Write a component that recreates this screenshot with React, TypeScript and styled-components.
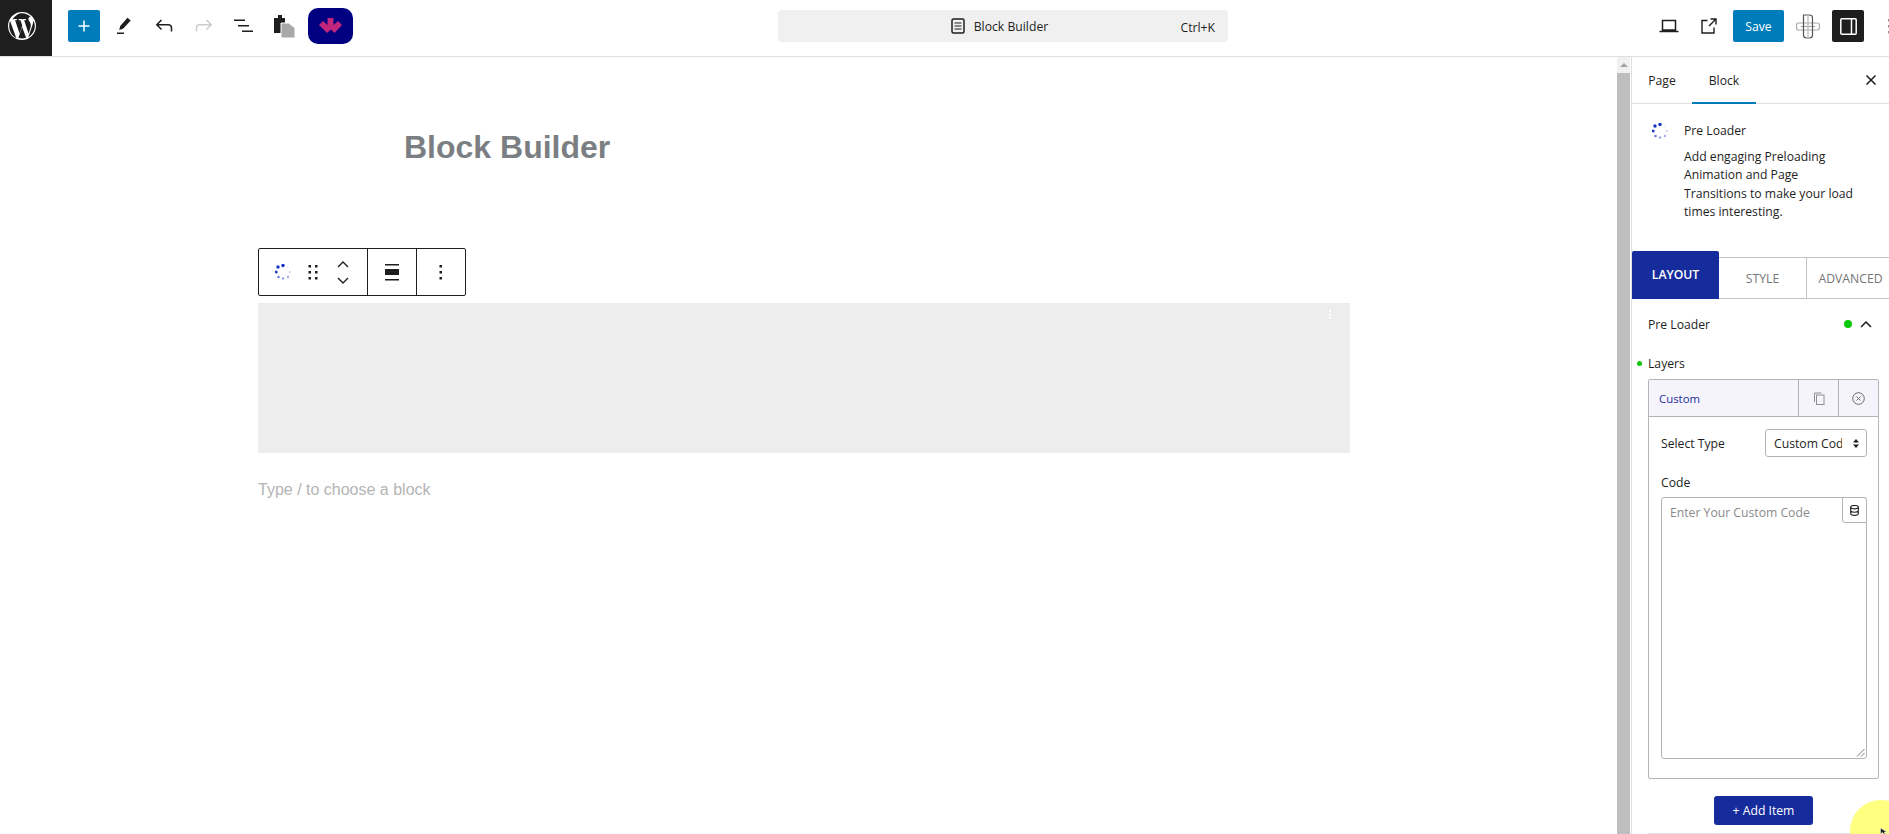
import * as React from "react";
import styled, { createGlobalStyle } from "styled-components";

const GlobalStyle = createGlobalStyle`
  html, body { margin: 0; padding: 0; background: #fff; overflow: hidden; }
  body { font-family: "Open Sans", "Noto Sans", sans-serif; color: #1e1e1e; }
  * { box-sizing: border-box; }
`;

const Page = styled.div`
  width: 1889px;
  height: 834px;
  display: flex;
  flex-direction: column;
  overflow: hidden;
`;

const TopBar = styled.header`
  height: 57px;
  flex: none;
  display: flex;
  align-items: flex-start;
  border-bottom: 1px solid #e0e0e0;
  position: relative;
`;

const WpTile = styled.div`
  width: 52px;
  height: 56px;
  padding: 0 8px 4px 0;
  background: #1e1e1e;
  display: flex;
  align-items: center;
  justify-content: center;
`;

const LeftTools = styled.div`
  display: flex;
  align-items: center;
  height: 52px;
  margin-left: 16px;
`;

const SquareButton = styled.div<{ $bg?: string }>`
  width: 32px;
  height: 32px;
  border-radius: 2px;
  background: ${(p) => p.$bg ?? "transparent"};
  display: flex;
  align-items: center;
  justify-content: center;
  flex: none;
`;

const ToolSlot = styled.div<{ $w?: number }>`
  width: ${(p) => p.$w ?? 40}px;
  height: 32px;
  display: flex;
  align-items: center;
  justify-content: center;
  flex: none;
`;

const BrandTile = styled.div`
  width: 45px;
  height: 36px;
  border-radius: 10px;
  background: #000080;
  display: flex;
  align-items: center;
  justify-content: center;
  flex: none;
`;

const CommandBar = styled.div`
  position: absolute;
  left: 778px;
  top: 10px;
  width: 450px;
  height: 32px;
  border-radius: 4px;
  background: #f0f0f0;
  display: flex;
  align-items: center;
  justify-content: center;
  gap: 9px;
  padding-right: 7px;
  font-size: 12.2px;
`;

const CommandShortcut = styled.span`
  position: absolute;
  right: 13px;
  top: 9px;
  line-height: 17px;
  font-size: 12.2px;
`;

const RightTools = styled.div`
  margin-left: auto;
  margin-right: -26px;
  height: 52px;
  display: flex;
  align-items: center;
`;

const SaveButton = styled.div`
  width: 51px;
  height: 32px;
  margin-left: 4px;
  border-radius: 2px;
  background: #007cba;
  color: #fff;
  font-size: 12.2px;
  display: flex;
  align-items: center;
  justify-content: center;
`;

const Body = styled.div`
  flex: 1;
  min-height: 0;
  display: flex;
`;

const Canvas = styled.main`
  flex: 1;
  min-width: 0;
  padding: 66px 0 0 258px;
`;

const PostTitle = styled.h1`
  margin: 0 0 0 146px;
  font: 700 32px/48px "Liberation Sans", Arial, sans-serif;
  color: #7b7f83;
`;

const BlockToolbar = styled.div`
  margin-top: 77px;
  width: 208px;
  height: 48px;
  border: 1px solid #1e1e1e;
  border-radius: 2px;
  display: flex;
  background: #fff;
`;

const ToolbarGroup = styled.div<{ $w: number; $start?: boolean }>`
  width: ${(p) => p.$w}px;
  flex: none;
  display: flex;
  align-items: center;
  justify-content: ${(p) => (p.$start ? "flex-start" : "center")};
  padding-left: ${(p) => (p.$start ? 16 : 0)}px;
  & + & { border-left: 1px solid #1e1e1e; }
`;

const MoverColumn = styled.div`
  display: flex;
  flex-direction: column;
  gap: 9px;
  margin-left: 2px;
  svg { display: block; }
`;

const LoaderBlock = styled.div`
  margin-top: 7px;
  width: 1092px;
  height: 150px;
  background: #ededed;
  position: relative;
`;

const BlockDots = styled.div`
  position: absolute;
  right: 19px;
  top: 7px;
  display: flex;
  flex-direction: column;
  gap: 1.5px;
  i { width: 2px; height: 2px; background: #fff; display: block; }
`;

const Placeholder = styled.p`
  margin: 24px 0 0;
  font: 16px/26px "Liberation Sans", Arial, sans-serif;
  color: #b4b4b4;
`;

const ScrollTrack = styled.div`
  width: 15px;
  flex: none;
  background: #fff;
  border-right: 1px solid #e0e0e0;
  display: flex;
  flex-direction: column;
  align-items: stretch;
  padding-right: 1px;
`;

const ScrollArrow = styled.div`
  height: 16px;
  flex: none;
  background: #f1f1f1;
  display: flex;
  align-items: center;
  justify-content: center;
  &::before {
    content: "";
    border-left: 4px solid transparent;
    border-right: 4px solid transparent;
    border-bottom: 4px solid #a3a3a3;
  }
`;

const ScrollThumb = styled.div`
  flex: 1;
  background: #bebebe;
`;

const Sidebar = styled.aside`
  width: 257px;
  flex: none;
  position: relative;
  overflow: hidden;
  font-size: 12.2px;
`;

const SideTabs = styled.div`
  height: 47px;
  display: flex;
  align-items: stretch;
  border-bottom: 1px solid #e0e0e0;
  position: relative;
`;

const SideTab = styled.div<{ $active?: boolean; $w: number }>`
  width: ${(p) => p.$w}px;
  display: flex;
  align-items: center;
  justify-content: center;
  box-shadow: ${(p) => (p.$active ? "inset 0 -2px 0 #007cba" : "none")};
  margin-bottom: -1px;
`;

const CloseMark = styled.div`
  position: absolute;
  right: 12px;
  top: 17px;
  display: flex;
`;

const BlockCard = styled.div`
  display: flex;
  padding: 18px 16px 0 20px;
  height: 147px;
`;

const CardIcon = styled.div`
  width: 16px;
  height: 16px;
  margin: 1px 16px 0 0;
  flex: none;
`;

const CardTitle = styled.div`
  line-height: 18px;
  font-weight: 500;
  margin-bottom: 8px;
`;

const CardText = styled.div`
  line-height: 18.3px;
  width: 174px;
`;

const PanelTabs = styled.div`
  display: flex;
  align-items: flex-end;
  height: 48px;
`;

const PanelTab = styled.div<{ $active?: boolean; $w: number }>`
  width: ${(p) => p.$w}px;
  flex: none;
  height: ${(p) => (p.$active ? 48 : 42)}px;
  display: flex;
  align-items: center;
  justify-content: center;
  font-weight: ${(p) => (p.$active ? 600 : 400)};
  color: ${(p) => (p.$active ? "#fff" : "#757575")};
  background: ${(p) => (p.$active ? "#172c9c" : "#fff")};
  border-radius: ${(p) => (p.$active ? "2px 2px 0 0" : "0")};
  padding-bottom: ${(p) => (p.$active ? 2 : 0)}px;
  border: ${(p) => (p.$active ? "none" : "1px solid #c4c4c4")};
  border-left: ${(p) => (p.$active ? "none" : "0")};
  white-space: nowrap;
`;

const PanelHead = styled.div`
  height: 50px;
  display: flex;
  align-items: center;
  padding: 0 16px;
`;

const PanelName = styled.span`
  flex: 1;
`;

const GreenDot = styled.span<{ $size: number }>`
  width: ${(p) => p.$size}px;
  height: ${(p) => p.$size}px;
  border-radius: 50%;
  background: #0cc80c;
  display: block;
  flex: none;
`;

const LayersLabel = styled.div`
  display: flex;
  align-items: center;
  gap: 6px;
  padding-left: 5px;
  height: 18px;
  margin-top: 5px;
`;

const RepeaterBox = styled.div`
  margin: 7px 0 0 16px;
  width: 231px;
  height: 400px;
  border: 1px solid #b4b4b4;
  border-radius: 2px;
  display: flex;
  flex-direction: column;
`;

const RepeaterHead = styled.div`
  height: 37px;
  flex: none;
  display: flex;
  background: #f5f3fb;
  border-bottom: 1px solid #b4b4b4;
`;

const RepeaterTitle = styled.div`
  flex: 1;
  color: #1d2f9e;
  font-size: 11.4px;
  display: flex;
  align-items: center;
  padding-left: 10px;
`;

const RepeaterAction = styled.div`
  width: 40px;
  flex: none;
  border-left: 1px solid #b4b4b4;
  display: flex;
  align-items: center;
  justify-content: center;
`;

const RepeaterBody = styled.div`
  padding: 12px 11px 0 12px;
  flex: 1;
  display: flex;
  flex-direction: column;
`;

const TypeRow = styled.div`
  display: flex;
  align-items: center;
  justify-content: space-between;
  height: 28px;
`;

const FakeSelect = styled.div`
  width: 102px;
  height: 28px;
  border: 1px solid #b4b4b4;
  border-radius: 3px;
  padding: 0 7px 0 8px;
  display: flex;
  align-items: center;
  justify-content: space-between;
  span { width: 68px; overflow: hidden; white-space: nowrap; }
`;

const CodeLabel = styled.div`
  margin-top: 17px;
  line-height: 18px;
`;

const CodeArea = styled.div`
  margin-top: 5px;
  flex: none;
  height: 262px;
  width: 206px;
  border: 1px solid #b4b4b4;
  border-radius: 3px;
  position: relative;
  padding: 6px 8px;
  color: #8a8a8a;
  line-height: 18px;
`;

const DbButton = styled.div`
  position: absolute;
  right: -1px;
  top: -1px;
  width: 25px;
  height: 26px;
  border: 1px solid #b4b4b4;
  border-radius: 0 3px 0 3px;
  display: flex;
  align-items: center;
  justify-content: center;
  background: #fff;
`;

const ResizeGrip = styled.svg`
  position: absolute;
  right: 1px;
  bottom: 1px;
`;

const AddItemRow = styled.div`
  display: flex;
  justify-content: center;
  margin: 17px 0 0 16px;
  width: 231px;
`;

const AddItemButton = styled.div`
  width: 99px;
  height: 29px;
  border-radius: 3px;
  background: #172c9c;
  color: #fff;
  display: flex;
  align-items: center;
  justify-content: center;
`;

const PanelFoot = styled.div`
  margin: 8px 0 0 16px;
  height: 1px;
  background: #e0e0e0;
`;

const CursorHalo = styled.div`
  position: absolute;
  right: -23px;
  bottom: -28px;
  width: 62px;
  height: 62px;
  border-radius: 50%;
  background: #ffff80;
`;

const CursorArrow = styled.svg`
  position: absolute;
  right: 2px;
  bottom: 0;
`;

const Spinner = () => (
  <svg width="16" height="16" viewBox="0 0 16 16">
    <circle cx="8" cy="1.500" r="1.700" fill="#1432c8" />
    <circle cx="3" cy="3" r="1.700" fill="#1432c8" />
    <circle cx="1.200" cy="8" r="1.500" fill="#1f3cc8" />
    <circle cx="3.500" cy="13" r="1.300" fill="#6c7ce0" />
    <circle cx="8" cy="14.500" r="1.200" fill="#98a4ea" />
    <circle cx="13" cy="13" r="1.200" fill="#a2adee" />
    <circle cx="14.800" cy="8" r="1" fill="#c0c8f2" />
    <circle cx="12.500" cy="3" r="0.800" fill="#dde1f8" />
  </svg>
);

const WpLogo = () => (
  <svg width="32" height="32" viewBox="0 0 24 24" fill="#fff">
    <path d="M12 1.500C6.200 1.500 1.500 6.200 1.500 12S6.200 22.500 12 22.500 22.500 17.800 22.500 12 17.800 1.500 12 1.500zm0 .9c2.500 0 4.800 1 6.500 2.600h-.1c-1 0-1.600.8-1.600 1.700 0 .8.500 1.400 1 2.200.4.600.8 1.500.8 2.700 0 .8-.3 1.800-.7 3.100l-.9 3.100-3.400-10.100c.6 0 1.100-.1 1.100-.1.500-.1.500-.8 0-.8 0 0-1.500.1-2.500.1-.9 0-2.400-.1-2.400-.1-.5 0-.6.800 0 .8 0 0 .5.100 1 .1l1.400 3.900-2 6.100-3.400-10c.6 0 1.100-.1 1.100-.1.500-.1.500-.8 0-.8 0 0-1.500.1-2.500.1h-.6C7.500 3.600 9.600 2.400 12 2.400zM3 8.100l4.700 12.900C4.500 19.400 2.400 16 2.400 12c0-1.400.2-2.700.6-3.900zm9.100 4.700l2.900 7.900v.1c-1 .3-2 .5-3 .5-.9 0-1.800-.1-2.700-.4l2.800-8.100zm8.100-5.300c.9 1.500 1.400 3 1.400 4.500 0 3.500-1.900 6.600-4.800 8.300l2.900-8.500c.6-1.400.7-2.500.7-3.500 0-.4 0-.6-.2-.8z" />
  </svg>
);

const Dots = ({ gapY = 6 }: { gapY?: number }) => (
  <svg width="4" height={gapY * 2 + 3} viewBox={`0 0 4 ${gapY * 2 + 3}`} fill="#1e1e1e">
    <rect x="0.500" y="0" width="2.500" height="2.500" />
    <rect x="0.500" y={gapY} width="2.500" height="2.500" />
    <rect x="0.500" y={gapY * 2} width="2.500" height="2.500" />
  </svg>
);

export default function App() {
  return (
    <Page>
      <GlobalStyle />
      <TopBar>
        <WpTile>
          <WpLogo />
        </WpTile>
        <LeftTools>
          <SquareButton $bg="#007cba">
            <svg width="14" height="14" viewBox="0 0 14 14" stroke="#fff" strokeWidth="1.500">
              <path d="M7 1.500v11M1.500 7h11" />
            </svg>
          </SquareButton>
          <ToolSlot $w={48}>
            <svg width="18" height="20" viewBox="0 0 18 20" fill="#1e1e1e">
              <path d="M12.500 1.800l3.200 2.800-7.600 8.100-3.900 1.200 1-3.900z" />
              <rect x="2" y="16.500" width="7" height="1.500" />
            </svg>
          </ToolSlot>
          <ToolSlot $w={32}>
            <svg width="18" height="14" viewBox="0 0 18 14" fill="none" stroke="#1e1e1e" strokeWidth="1.500">
              <path d="M16.500 12.500V9c0-2-1.500-3.200-3.500-3.200H2M6.500 1L1.800 5.800l4.700 4.700" />
            </svg>
          </ToolSlot>
          <ToolSlot $w={48}>
            <svg width="18" height="14" viewBox="0 0 18 14" fill="none" stroke="#cccccc" strokeWidth="1.500">
              <path d="M1.500 12.500V9c0-2 1.500-3.200 3.500-3.200h11M11.500 1l4.700 4.800-4.700 4.700" />
            </svg>
          </ToolSlot>
          <ToolSlot $w={32}>
            <svg width="20" height="14" viewBox="0 0 20 14" fill="#1e1e1e">
              <rect x="0" y="0.500" width="11" height="1.500" />
              <rect x="4" y="6" width="11" height="1.500" />
              <rect x="8" y="11.500" width="11" height="1.500" />
            </svg>
          </ToolSlot>
          <ToolSlot $w={48}>
            <svg width="21" height="23" viewBox="0 0 21 23">
              <path d="M0 3h4V0h4v3h3v15H0z" fill="#1e1e1e" />
              <path d="M7 8h8l6 5v10H7z" fill="#a8a8a8" stroke="#fff" strokeWidth="1" />
            </svg>
          </ToolSlot>
          <BrandTile>
            <svg width="23" height="16" viewBox="0 0 23 16" fill="#c2257e">
              <path d="M8.500 0h6v7l4.500-4 4 4-7.500 8-3.500-3.500L8 15 0 7l4-4 4.500 4z" />
            </svg>
          </BrandTile>
        </LeftTools>
        <CommandBar>
          <svg width="14" height="16" viewBox="0 0 14 16" fill="none" stroke="#1e1e1e">
            <rect x="1" y="1" width="12" height="14" rx="1.500" strokeWidth="1.500" />
            <path d="M3.500 5h7M3.500 8h7M3.500 11h7" strokeWidth="1.200" />
          </svg>
          <span>Block Builder</span>
          <CommandShortcut>Ctrl+K</CommandShortcut>
        </CommandBar>
        <RightTools>
          <ToolSlot $w={40}>
            <svg width="20" height="14" viewBox="0 0 20 14" fill="none" stroke="#1e1e1e" strokeWidth="1.500">
              <path d="M3.500 1.500h13v9.500h-13zM0.500 12.500h19" />
            </svg>
          </ToolSlot>
          <ToolSlot $w={40}>
            <svg width="16" height="16" viewBox="0 0 16 16" fill="none" stroke="#1e1e1e" strokeWidth="1.400">
              <path d="M6.500 2.500H1v12.500h12V9.500M8 8l7-7M9.500 1H15v5.500" />
            </svg>
          </ToolSlot>
          <SaveButton>Save</SaveButton>
          <ToolSlot $w={48}>
            <svg width="24" height="25" viewBox="0 0 24 25" fill="none" strokeWidth="1.200">
              <path d="M2 9h19c1.500 0 2.500 1 2.500 2v3c0 1-1 2-2.500 2H2c-1 0-1.500-1-1.500-2v-3c0-1 .5-2 1.500-2z" stroke="#a8a8a8" />
              <path d="M5 12.500h14" stroke="#a8a8a8" />
              <path d="M7.500 1v20c0 2 1 3 3 3h3c2 0 3-1 3-3V4c0-2-1-3-3-3z" stroke="#555" />
              <path d="M12 1v24" stroke="#b8b8b8" />
            </svg>
          </ToolSlot>
          <SquareButton $bg="#1e1e1e">
            <svg width="17" height="17" viewBox="0 0 17 17" fill="none" stroke="#fff" strokeWidth="1.500">
              <rect x="0.800" y="0.800" width="15.400" height="15.400" rx="1" />
              <path d="M11.500 1v15" />
            </svg>
          </SquareButton>
          <ToolSlot $w={51}>
            <Dots />
          </ToolSlot>
        </RightTools>
      </TopBar>
      <Body>
        <Canvas>
          <PostTitle>Block Builder</PostTitle>
          <BlockToolbar>
            <ToolbarGroup $w={108} $start>
              <Spinner />
              <ToolSlot $w={44}>
                <svg width="10" height="16" viewBox="0 0 10 16" fill="#1e1e1e">
                  <rect x="0.500" y="1" width="2.500" height="2.500" />
                  <rect x="7" y="1" width="2.500" height="2.500" />
                  <rect x="0.500" y="7" width="2.500" height="2.500" />
                  <rect x="7" y="7" width="2.500" height="2.500" />
                  <rect x="0.500" y="13" width="2.500" height="2.500" />
                  <rect x="7" y="13" width="2.500" height="2.500" />
                </svg>
              </ToolSlot>
              <MoverColumn>
                <svg width="12" height="7" viewBox="0 0 12 7" fill="none" stroke="#1e1e1e" strokeWidth="1.400">
                  <path d="M1 6l5-5 5 5" />
                </svg>
                <svg width="12" height="7" viewBox="0 0 12 7" fill="none" stroke="#1e1e1e" strokeWidth="1.400">
                  <path d="M1 1l5 5 5-5" />
                </svg>
              </MoverColumn>
            </ToolbarGroup>
            <ToolbarGroup $w={49}>
              <svg width="14" height="17" viewBox="0 0 14 17" fill="#1e1e1e">
                <rect x="0" y="0" width="14" height="1.500" />
                <rect x="0" y="5" width="14" height="6" />
                <rect x="0" y="15" width="14" height="1.500" />
              </svg>
            </ToolbarGroup>
            <ToolbarGroup $w={49}>
              <Dots />
            </ToolbarGroup>
          </BlockToolbar>
          <LoaderBlock>
            <BlockDots>
              <i />
              <i />
              <i />
            </BlockDots>
          </LoaderBlock>
          <Placeholder>Type / to choose a block</Placeholder>
        </Canvas>
        <ScrollTrack>
          <ScrollArrow />
          <ScrollThumb />
        </ScrollTrack>
        <Sidebar>
          <SideTabs>
            <SideTab $w={60}>Page</SideTab>
            <SideTab $w={64} $active>Block</SideTab>
            <CloseMark>
              <svg width="12" height="12" viewBox="0 0 12 12" stroke="#1e1e1e" strokeWidth="1.500">
                <path d="M1.500 1.500l9 9M10.500 1.500l-9 9" />
              </svg>
            </CloseMark>
          </SideTabs>
          <BlockCard>
            <CardIcon>
              <Spinner />
            </CardIcon>
            <div>
              <CardTitle>Pre Loader</CardTitle>
              <CardText>Add engaging Preloading Animation and Page Transitions to make your load times interesting.</CardText>
            </div>
          </BlockCard>
          <PanelTabs>
            <PanelTab $active $w={87}>LAYOUT</PanelTab>
            <PanelTab $w={88}>STYLE</PanelTab>
            <PanelTab $w={88}>ADVANCED</PanelTab>
          </PanelTabs>
          <PanelHead>
            <PanelName>Pre Loader</PanelName>
            <GreenDot $size={8} />
            <svg width="12" height="7" viewBox="0 0 12 7" fill="none" stroke="#1e1e1e" strokeWidth="1.500" style={{ marginLeft: 8, marginRight: 1 }}>
              <path d="M1 6l5-5 5 5" />
            </svg>
          </PanelHead>
          <LayersLabel>
            <GreenDot $size={5} />
            <span>Layers</span>
          </LayersLabel>
          <RepeaterBox>
            <RepeaterHead>
              <RepeaterTitle>Custom</RepeaterTitle>
              <RepeaterAction>
                <svg width="12" height="13" viewBox="0 0 12 13" fill="none" stroke="#909090">
                  <rect x="3.500" y="3" width="7.500" height="9.500" />
                  <path d="M8.500 1H1.500v9" />
                </svg>
              </RepeaterAction>
              <RepeaterAction>
                <svg width="13" height="13" viewBox="0 0 13 13" fill="none" stroke="#6a6a6a">
                  <circle cx="6.500" cy="6.500" r="5.800" />
                  <path d="M4.500 4.500l4 4M8.500 4.500l-4 4" />
                </svg>
              </RepeaterAction>
            </RepeaterHead>
            <RepeaterBody>
              <TypeRow>
                <span>Select Type</span>
                <FakeSelect>
                  <span>Custom Code</span>
                  <svg width="6" height="9" viewBox="0 0 6 9" fill="#1e1e1e">
                    <path d="M3 0l3 3.500H0zM3 9L0 5.500h6z" />
                  </svg>
                </FakeSelect>
              </TypeRow>
              <CodeLabel>Code</CodeLabel>
              <CodeArea>
                Enter Your Custom Code
                <DbButton>
                  <svg width="9" height="11" viewBox="0 0 9 11" fill="none" stroke="#1e1e1e" strokeWidth="1.100">
                    <ellipse cx="4.500" cy="2.200" rx="3.800" ry="1.700" />
                    <path d="M.7 2.200v6.400c0 1 1.700 1.800 3.800 1.800s3.800-.8 3.800-1.800V2.200M.7 5.500c0 1 1.700 1.700 3.800 1.700s3.800-.7 3.800-1.700" />
                  </svg>
                </DbButton>
                <ResizeGrip width="9" height="9" viewBox="0 0 9 9" stroke="#555" strokeWidth="0.800">
                  <path d="M1 8.500L8.500 1M5 8.500L8.500 5" />
                </ResizeGrip>
              </CodeArea>
            </RepeaterBody>
          </RepeaterBox>
          <AddItemRow>
            <AddItemButton>+ Add Item</AddItemButton>
          </AddItemRow>
          <PanelFoot />
          <CursorHalo />
          <CursorArrow width="7" height="6" viewBox="0 0 7 6" fill="#1e1e1e" stroke="#fff" strokeWidth="0.500">
            <path d="M.5 0v6l1.800-1.600L4 6h1.500L4 4h3z" />
          </CursorArrow>
        </Sidebar>
      </Body>
    </Page>
  );
}
